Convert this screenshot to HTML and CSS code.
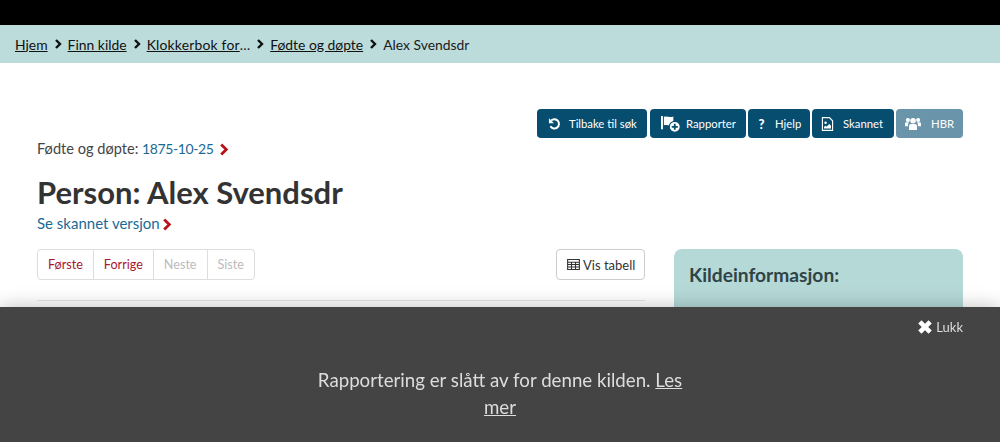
FILE: index.html
```html
<!DOCTYPE html>
<html lang="no">
<head>
    <meta charset="UTF-8">
    <meta name="viewport" content="width=device-width, initial-scale=1.0">
    <title>Person: Alex Svendsdr</title>
    <link rel="stylesheet" href="styles.css">
</head>
<body>
    <div class="top-bar"></div>

    <nav class="breadcrumbs">
        <a href="#">Hjem</a>
        <svg class="crumb-sep" viewBox="0 0 8 12"><path d="M2 2l4 4-4 4" /></svg>
        <a href="#">Finn kilde</a>
        <svg class="crumb-sep" viewBox="0 0 8 12"><path d="M2 2l4 4-4 4" /></svg>
        <a href="#" class="crumb-long">Klokkerbok for</a><span>…</span>
        <svg class="crumb-sep" viewBox="0 0 8 12"><path d="M2 2l4 4-4 4" /></svg>
        <a href="#">Fødte og døpte</a>
        <svg class="crumb-sep" viewBox="0 0 8 12"><path d="M2 2l4 4-4 4" /></svg>
        <span>Alex Svendsdr</span>
    </nav>

    <main class="page">
        <div class="actions">
            <a href="#" class="action-button btn-back">
                <svg class="action-icon" viewBox="0 0 14 14"><path class="stroke" d="M3.400 3.200A5 5 0 1 1 2.600 9.500"/><path class="fill" d="M1 .800v5.400h5.400z"/></svg>
                Tilbake til søk
            </a>
            <a href="#" class="action-button btn-report">
                <svg class="action-icon icon-report" viewBox="0 0 22 19"><path class="fill" d="M1 1h2v14H1zM4 2c3-1.500 6 1.200 10-.4v8.900c-4 1.600-7-1-10 .4z"/><circle cx="15.500" cy="12.500" r="5.800" class="fill" stroke="#064d70" stroke-width="1.200"/><path d="M15.500 9.300v6.400M12.300 12.500h6.400" stroke="#064d70" stroke-width="1.900"/></svg>
                Rapporter
            </a>
            <a href="#" class="action-button btn-help">
                <span class="help-mark">?</span>
                Hjelp
            </a>
            <a href="#" class="action-button btn-scan">
                <svg class="action-icon" viewBox="0 0 14 16"><path fill="none" stroke="#fff" stroke-width="1.300" d="M1.200.700h8l3.600 3.600v11H1.200z"/><circle class="fill" cx="4.800" cy="6.500" r="1.400"/><path class="fill" d="M3 13.200v-1.700l1.800-1.700 1.200 1.200 3-3 2 2v3.200z"/></svg>
                Skannet
            </a>
            <a href="#" class="action-button btn-hbr">
                <svg class="action-icon icon-users" viewBox="0 0 20 16"><circle class="fill" cx="10" cy="4.500" r="3.400"/><circle class="fill" cx="3.600" cy="3.600" r="2.600"/><circle class="fill" cx="16.400" cy="3.600" r="2.600"/><path class="fill" d="M5 16v-4.500c0-2 1.500-3 2.800-3h4.400c1.300 0 2.800 1 2.800 3V16zM0 11.500V8.300C0 7 1 6.500 2 6.500h3c-.9.900-1.200 2.200-1.200 5zM20 11.500V8.300c0-1.300-1-1.800-2-1.800h-3c.9.900 1.200 2.200 1.200 5z"/></svg>
                HBR
            </a>
        </div>

        <p class="record-line">
            Fødte og døpte: <a href="#" class="record-date">1875-10-25</a>
            <svg class="red-chevron" viewBox="0 0 10 14"><path d="M2 1.500 7.500 7 2 12.500"/></svg>
        </p>

        <h1 class="person-title">Person: Alex Svendsdr</h1>
        <p class="scan-link">
            <a href="#">Se skannet versjon</a><svg class="red-chevron" viewBox="0 0 10 14"><path d="M2 1.500 7.500 7 2 12.500"/></svg>
        </p>

        <div class="columns">
            <div class="main-col">
                <div class="toolbar">
                    <div class="pager">
                        <a href="#" class="pager-item">Første</a>
                        <a href="#" class="pager-item">Forrige</a>
                        <span class="pager-item pager-off">Neste</span>
                        <span class="pager-item pager-off">Siste</span>
                    </div>
                    <a href="#" class="table-button">
                        <svg class="table-icon" viewBox="0 0 14 12"><path d="M.600.600h12.800v10.800H.600zM.600 3.500h12.800M.600 6h12.800M.600 8.700h12.800M4.800 3.500v7.900M9.200 3.500v7.900"/></svg>
                        Vis tabell
                    </a>
                </div>
                <div class="divider"></div>
            </div>
            <aside class="source-panel">
                <h2>Kildeinformasjon:</h2>
            </aside>
        </div>
    </main>

    <div class="notice">
        <a href="#" class="notice-close">
            <svg class="close-icon" viewBox="0 0 14 14"><path d="M2.500 2.500l9 9M11.500 2.500l-9 9"/></svg>
            Lukk
        </a>
        <p class="notice-text">Rapportering er slått av for denne kilden. <a href="#">Les mer</a></p>
    </div>
</body>
</html>
```

FILE: styles.css
```css
html, body {
    height: 100%;
}
body {
    margin: 0;
    overflow: hidden;
    font-family: "Lato", "Open Sans", sans-serif;
    font-size: 15px;
    color: #444;
    background-color: #fff;
}
a {
    color: #1a6a94;
    text-decoration: none;
}
.top-bar {
    height: 25px;
    background-color: #000;
}
.breadcrumbs {
    display: flex;
    align-items: center;
    height: 38px;
    padding-left: 15px;
    background-color: #bcdcdc;
    color: #1b1b1b;
    font-size: 13.900px;
}
.breadcrumbs a {
    color: #111;
    text-decoration: underline;
}
.crumb-long {
    letter-spacing: 0.2px;
}
.crumb-sep {
    width: 8px;
    height: 12px;
    margin: 0 6px;
    fill: none;
    stroke: #111;
    stroke-width: 2.400;
}
.page {
    padding: 46px 37px 0;
}
.actions {
    display: flex;
    justify-content: flex-end;
    gap: 2px;
}
.action-button {
    display: flex;
    align-items: center;
    height: 29px;
    box-sizing: border-box;
    padding-left: 11px;
    border-radius: 4px;
    background-color: #064d70;
    color: #fff;
    font-size: 11.300px;
}
.btn-back {
    width: 110px;
    margin-right: 1px;
    gap: 8px;
}
.btn-report {
    width: 96px;
    padding-left: 10px;
    gap: 5px;
}
.btn-help {
    width: 62px;
    padding-left: 9px;
    gap: 9px;
}
.btn-scan {
    width: 82px;
    padding-left: 9px;
    gap: 9px;
}
.btn-hbr {
    width: 67px;
    padding-left: 9px;
    gap: 10px;
    background-color: #6a94a9;
}
.action-icon {
    width: 13px;
    height: 14px;
    flex-shrink: 0;
}
.icon-report {
    width: 21px;
    height: 18px;
}
.icon-users {
    width: 16px;
    height: 13px;
}
.fill {
    fill: #fff;
}
.stroke {
    fill: none;
    stroke: #fff;
    stroke-width: 2.200;
}
.help-mark {
    width: 9px;
    text-align: center;
    font-size: 13px;
    font-weight: 900;
}
.record-line {
    margin: 1px 0 0;
    line-height: 20px;
    font-size: 14.600px;
}
.record-date {
    font-size: 14px;
    letter-spacing: -0.4px;
}
.red-chevron {
    width: 10px;
    height: 13px;
    margin-left: 2px;
    fill: none;
    stroke: #b5121b;
    stroke-width: 3;
    vertical-align: -2px;
}
.person-title {
    margin: 14px 0 0;
    line-height: 38px;
    font-size: 31px;
    font-weight: 700;
    color: #333;
}
.scan-link {
    margin: 2px 0 0;
    line-height: 20px;
    font-size: 15px;
}
.columns {
    display: flex;
    gap: 29px;
    margin-top: 16px;
}
.main-col {
    flex: 0 0 608px;
}
.toolbar {
    display: flex;
    justify-content: space-between;
}
.pager {
    display: flex;
    height: 31px;
    box-sizing: border-box;
    border: 1px solid #ddd;
    border-radius: 4px;
}
.pager-item {
    display: flex;
    align-items: center;
    padding: 0 10px;
    border-left: 1px solid #ddd;
    color: #a8192e;
    font-size: 12.600px;
}
.pager-item:first-child {
    border-left: none;
}
.pager-off {
    color: #bbb;
}
.table-button {
    display: flex;
    align-items: center;
    gap: 3px;
    width: 89px;
    height: 31px;
    box-sizing: border-box;
    padding-left: 10px;
    border: 1px solid #ccc;
    border-radius: 4px;
    color: #333;
    font-size: 13px;
}
.table-icon {
    width: 13px;
    height: 11px;
    fill: none;
    stroke: #333;
    stroke-width: 1.200;
}
.divider {
    margin-top: 20px;
    border-top: 1px solid #e4e4e4;
}
.source-panel {
    flex: 0 0 289px;
    height: 120px;
    box-sizing: border-box;
    padding: 14px 15px;
    border-radius: 8px;
    background-color: #b5d9d7;
}
.source-panel h2 {
    margin: 0;
    line-height: 24px;
    font-size: 19.200px;
    font-weight: 700;
    color: #2f4447;
}
.notice {
    position: fixed;
    left: 0;
    right: 0;
    bottom: 0;
    height: 135px;
    background-color: #444;
    box-shadow: 0 0 18px rgba(0, 0, 0, 0.25);
    color: #ddd;
}
.notice-close {
    display: flex;
    justify-content: flex-end;
    align-items: center;
    gap: 3px;
    padding: 11px 37px 0 0;
    line-height: 18px;
    font-size: 13px;
    color: #ddd;
}
.close-icon {
    width: 16px;
    height: 16px;
    fill: none;
    stroke: #fff;
    stroke-width: 4;
}
.notice-text {
    width: 380px;
    margin: 31px auto 0;
    text-align: center;
    line-height: 27px;
    font-size: 18.700px;
}
.notice-text a {
    color: #ddd;
    text-decoration: underline;
}
```
